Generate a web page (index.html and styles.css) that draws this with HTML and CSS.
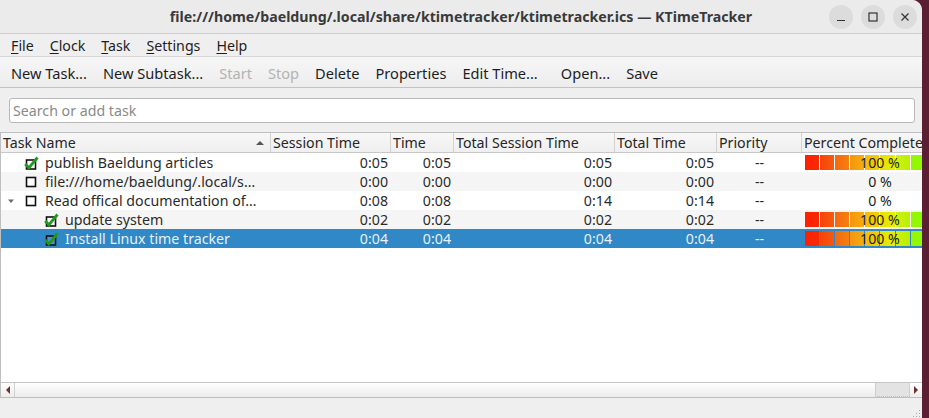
FILE: index.html
```html
<!DOCTYPE html>
<html>
<head>
<meta charset="utf-8">
<link rel="stylesheet" href="styles.css">
</head>
<body>
<div class="screen">
  <div class="window">
    <div class="titlebar">
      <div class="tb-side"></div>
      <div class="title">file:///home/baeldung/.local/share/ktimetracker/ktimetracker.ics — KTimeTracker</div>
      <div class="tb-side tb-buttons">
        <span class="wbtn"><svg width="10" height="10" viewBox="0 0 10 10"><path d="M1 8.5h8" stroke="#333" stroke-width="1.2"/></svg></span>
        <span class="wbtn"><svg width="10" height="10" viewBox="0 0 10 10"><rect x="1" y="1" width="8" height="8" fill="none" stroke="#333" stroke-width="1.2"/></svg></span>
        <span class="wbtn"><svg width="10" height="10" viewBox="0 0 10 10"><path d="M1.5 1.5l7 7M8.5 1.5l-7 7" stroke="#333" stroke-width="1.2"/></svg></span>
      </div>
    </div>
    <div class="menubar">
      <span class="menu"><u>F</u>ile</span>
      <span class="menu"><u>C</u>lock</span>
      <span class="menu"><u>T</u>ask</span>
      <span class="menu"><u>S</u>ettings</span>
      <span class="menu"><u>H</u>elp</span>
    </div>
    <div class="toolbar">
      <span class="tool">New Task...</span>
      <span class="tool">New Subtask...</span>
      <span class="tool disabled">Start</span>
      <span class="tool disabled">Stop</span>
      <span class="tool">Delete</span>
      <span class="tool">Properties</span>
      <span class="tool">Edit Time...</span>
      <span class="tool sep">Open...</span>
      <span class="tool">Save</span>
    </div>
    <div class="searchwrap">
      <div class="search">Search or add task</div>
    </div>
    <div class="tree">
      <div class="viewport">
        <div class="row header">
          <div class="hc name">Task Name<span class="sort"></span></div>
          <div class="hc">Session Time</div>
          <div class="hc">Time</div>
          <div class="hc">Total Session Time</div>
          <div class="hc">Total Time</div>
          <div class="hc">Priority</div>
          <div class="hc last">Percent Complete</div>
        </div>

        <div class="row">
          <div class="c name lvl0"><span class="exp"></span><span class="ico"><svg width="15" height="14" viewBox="0 0 15 14"><rect x="2.5" y="4" width="9" height="9" fill="#fff" stroke="#111" stroke-width="1.6"/><path d="M1.2 8l3.6 3.8L13.5 1.5" fill="none" stroke="#1f9a1f" stroke-width="2.8"/></svg></span><span class="txt">publish Baeldung articles</span></div>
          <div class="c num">0:05</div>
          <div class="c num">0:05</div>
          <div class="c num">0:05</div>
          <div class="c num">0:05</div>
          <div class="c ctr">--</div>
          <div class="c pct"><div class="bar"><i class="s1"></i><i class="s2"></i><i class="s3"></i><i class="s4"></i><i class="s5"></i><i class="s6"></i><i class="s7"></i><i class="s8"></i><i class="s9"></i><i class="s10"></i></div><span class="ptxt">100 %</span></div>
        </div>

        <div class="row alt">
          <div class="c name lvl0"><span class="exp"></span><span class="ico"><svg width="15" height="14" viewBox="0 0 15 14"><rect x="2.5" y="2.5" width="9" height="9" fill="#fff" stroke="#111" stroke-width="1.6"/></svg></span><span class="txt">file:///home/baeldung/.local/s…</span></div>
          <div class="c num">0:00</div>
          <div class="c num">0:00</div>
          <div class="c num">0:00</div>
          <div class="c num">0:00</div>
          <div class="c ctr">--</div>
          <div class="c pct"><span class="ptxt">0 %</span></div>
        </div>

        <div class="row">
          <div class="c name lvl0"><span class="exp"><svg width="8" height="6" viewBox="0 0 8 6"><path d="M1 1.5h6L4 5z" fill="#6b6b6b"/></svg></span><span class="ico"><svg width="15" height="14" viewBox="0 0 15 14"><rect x="2.5" y="2.5" width="9" height="9" fill="#fff" stroke="#111" stroke-width="1.6"/></svg></span><span class="txt">Read offical documentation of…</span></div>
          <div class="c num">0:08</div>
          <div class="c num">0:08</div>
          <div class="c num">0:14</div>
          <div class="c num">0:14</div>
          <div class="c ctr">--</div>
          <div class="c pct"><span class="ptxt">0 %</span></div>
        </div>

        <div class="row alt">
          <div class="c name lvl1"><span class="exp"></span><span class="ico"><svg width="15" height="14" viewBox="0 0 15 14"><rect x="2.5" y="4" width="9" height="9" fill="#fff" stroke="#111" stroke-width="1.6"/><path d="M1.2 8l3.6 3.8L13.5 1.5" fill="none" stroke="#1f9a1f" stroke-width="2.8"/></svg></span><span class="txt">update system</span></div>
          <div class="c num">0:02</div>
          <div class="c num">0:02</div>
          <div class="c num">0:02</div>
          <div class="c num">0:02</div>
          <div class="c ctr">--</div>
          <div class="c pct"><div class="bar"><i class="s1"></i><i class="s2"></i><i class="s3"></i><i class="s4"></i><i class="s5"></i><i class="s6"></i><i class="s7"></i><i class="s8"></i><i class="s9"></i><i class="s10"></i></div><span class="ptxt">100 %</span></div>
        </div>

        <div class="row sel">
          <div class="c name lvl1"><span class="exp"></span><span class="ico"><svg width="15" height="14" viewBox="0 0 15 14"><rect x="2.5" y="4" width="9" height="9" fill="#4a95cf" stroke="#111" stroke-width="1.6"/><path d="M1.2 8l3.6 3.8L13.5 1.5" fill="none" stroke="#1f9a1f" stroke-width="2.8"/></svg></span><span class="txt">Install Linux time tracker</span></div>
          <div class="c num">0:04</div>
          <div class="c num">0:04</div>
          <div class="c num">0:04</div>
          <div class="c num">0:04</div>
          <div class="c ctr">--</div>
          <div class="c pct"><div class="bar"><i class="s1"></i><i class="s2"></i><i class="s3"></i><i class="s4"></i><i class="s5"></i><i class="s6"></i><i class="s7"></i><i class="s8"></i><i class="s9"></i><i class="s10"></i></div><span class="ptxt">100 %</span></div>
        </div>
        <div class="empty"></div>
      </div>
      <div class="hscroll">
        <div class="sbtn"><svg width="6" height="10" viewBox="0 0 6 10"><path d="M5 1v8L1 5z" fill="#6e3030"/></svg></div>
        <div class="track"><div class="handle"></div></div>
        <div class="sbtn right"><svg width="6" height="10" viewBox="0 0 6 10"><path d="M1 1v8l4-4z" fill="#6e3030"/></svg></div>
      </div>
    </div>
    <div class="statusbar">
      <svg class="grip" width="9" height="9" viewBox="0 0 9 9"><g fill="#a8a8a8"><rect x="7" y="1" width="1" height="1"/><rect x="4" y="4" width="1" height="1"/><rect x="7" y="4" width="1" height="1"/><rect x="1" y="7" width="1" height="1"/><rect x="4" y="7" width="1" height="1"/><rect x="7" y="7" width="1" height="1"/></g></svg>
    </div>
  </div>
  <div class="desktop"></div>
</div>
</body>
</html>
```

FILE: styles.css
```css
* { box-sizing: border-box; }
html, body { margin: 0; padding: 0; }
body {
  font-family: "Noto Sans", "Open Sans", sans-serif;
  font-size: 14.2px;
  color: #2b2b2b;
  background: #5a1f33;
}
.screen {
  display: flex;
  width: 929px;
  height: 418px;
  overflow: hidden;
}
.window {
  width: 922px;
  height: 418px;
  background: #efefef;
  border-top-right-radius: 10px;
  display: flex;
  flex-direction: column;
  overflow: hidden;
}
.desktop { flex: 1; background: #5a1f33; }

.titlebar {
  height: 34px;
  flex: none;
  background: #ebebeb;
  border-bottom: 1px solid #cfcfcf;
  display: grid;
  grid-template-columns: 1fr auto 1fr;
  align-items: center;
}
.title {
  font-weight: bold;
  font-size: 14.2px;
  color: #3a3a3a;
}
.tb-buttons {
  display: flex;
  justify-content: flex-end;
  gap: 8px;
  padding-right: 5px;
}
.wbtn {
  width: 24px;
  height: 24px;
  border-radius: 50%;
  background: #dcdcdc;
  display: flex;
  align-items: center;
  justify-content: center;
}

.menubar {
  height: 23px;
  flex: none;
  display: flex;
  align-items: center;
  padding-left: 3px;
  padding-top: 1px;
  border-bottom: 1px solid #d6d6d6;
  background: #efefef;
}
.menu {
  padding: 0 8px;
  color: #1e1e1e;
}
.menu u { text-decoration-thickness: 1px; text-underline-offset: 2px; }

.toolbar {
  height: 31px;
  flex: none;
  display: flex;
  align-items: center;
  padding-left: 3px;
  padding-top: 2px;
  background: linear-gradient(#f6f6f6, #ededed);
  border-bottom: 1px solid #c2c2c2;
}
.tool {
  padding: 0 8px;
  font-size: 14.6px;
  color: #1e1e1e;
}
.tool.sep { margin-left: 7px; }
.tool.disabled { color: #b3b3b3; }

.searchwrap {
  flex: none;
  padding: 10px 7px 9px 9px;
}
.search {
  height: 25px;
  background: #fff;
  border: 1px solid #b9b9b9;
  border-radius: 3px;
  padding-left: 3px;
  display: flex;
  align-items: center;
  color: #8a8a8a;
}

.tree {
  flex: none;
  height: 266px;
  border: 1px solid #bfbfbf;
  border-right: none;
  background: #fff;
  display: flex;
  flex-direction: column;
}
.viewport {
  flex: 1;
  overflow: hidden;
  display: flex;
  flex-direction: column;
}
.row {
  display: grid;
  grid-template-columns: 270px 120px 63px 161px 102px 85px 156px;
  width: 957px;
  height: 19px;
  align-items: center;
  flex: none;
}
.row.header {
  height: 20px;
  background: linear-gradient(#f7f7f7, #efefef);
  border-bottom: 1px solid #c8c8c8;
}
.hc {
  height: 100%;
  display: flex;
  align-items: center;
  padding-left: 2px;
  border-right: 1px solid #d2d2d2;
  color: #262626;
  white-space: nowrap;
  overflow: hidden;
}
.hc.name { justify-content: space-between; padding-right: 6px; }
.hc.last { border-right: none; }
.sort {
  width: 0; height: 0;
  border-left: 4px solid transparent;
  border-right: 4px solid transparent;
  border-bottom: 4px solid #555;
}
.row.alt { background: #f5f5f5; }
.row.sel { background: #3088c7; color: #e9f0f6; }
.c {
  height: 100%;
  display: flex;
  align-items: center;
  white-space: nowrap;
  overflow: hidden;
}
.c.num { justify-content: flex-end; padding-right: 3px; }
.c.ctr { justify-content: center; }
.c.name { padding-left: 6px; }
.c.name.lvl1 { padding-left: 26px; }
.exp { width: 11px; display: flex; align-items: center; justify-content: flex-start; }
.ico { width: 20px; margin-left: 6px; display: flex; align-items: center; }
.txt { padding-left: 1px; }

.c.pct {
  position: relative;
  justify-content: center;
  padding: 2px 3px;
}
.bar {
  position: absolute;
  left: 3px; right: 3px; top: 2px; bottom: 2px;
  display: flex;
  gap: 1px;
}
.bar i { flex: 1; display: block; }
.s1 { background: linear-gradient(90deg, #ff1e00, #f52a05); }
.s2 { background: linear-gradient(90deg, #f84208, #f55a10); }
.s3 { background: linear-gradient(90deg, #f56810, #f5800e); }
.s4 { background: linear-gradient(90deg, #f59410, #f5ae0c); }
.s5 { background: linear-gradient(90deg, #f5bc08, #f2d000); }
.s6 { background: linear-gradient(90deg, #ecdc00, #e4f000); }
.s7 { background: linear-gradient(90deg, #d2f010, #b8f000); }
.s8 { background: linear-gradient(90deg, #98f400, #88ff00); }
.s9 { background: #70ff00; }
.s10 { background: #58ff00; }
.ptxt { position: relative; color: #1e1e1e; }

.empty { flex: 1; }

.hscroll {
  flex: none;
  height: 15px;
  border-top: 1px solid #c6c6c6;
  display: flex;
  background: linear-gradient(#ffffff, #ececec);
}
.sbtn {
  width: 14px;
  display: flex;
  align-items: center;
  justify-content: center;
  border-right: 1px solid #cfcfcf;
}
.sbtn.right { border-right: none; width: 12px; }
.track {
  flex: 1;
  display: flex;
  justify-content: flex-end;
}
.handle {
  width: 35px;
  background: #e3e3e3;
  border-left: 1px solid #cfcfcf;
  border-right: 1px solid #cfcfcf;
  border-bottom: 1px dotted #bdbdbd;
}
.statusbar {
  flex: 1;
  background: #efefef;
  display: flex;
  justify-content: flex-end;
  align-items: flex-end;
  padding: 0 1px 0 0;
}
.grip { display: block; }
```
